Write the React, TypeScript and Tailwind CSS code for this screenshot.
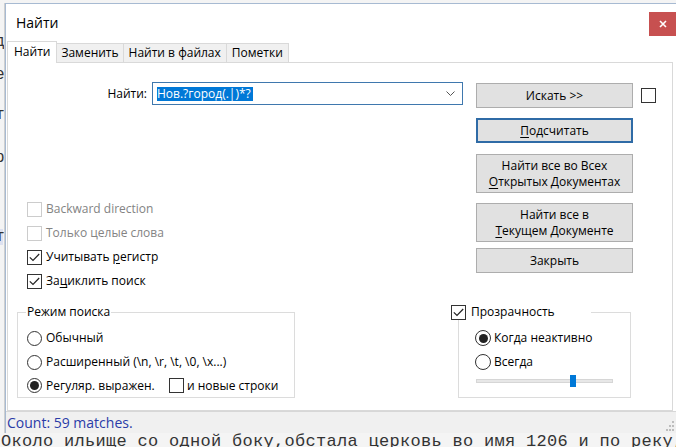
import React from 'react';

function CheckBox({ checked = false, disabled = false }: { checked?: boolean; disabled?: boolean }) {
  return (
    <span
      className={`flex h-[15px] w-[15px] shrink-0 items-center justify-center border bg-white ${
        disabled ? 'border-[#cccccc]' : 'border-[#333333]'
      }`}
    >
      {checked && (
        <svg width="11" height="9" viewBox="0 0 11 9" fill="none">
          <path d="M0.8 4.3 L4 7.5 L10.2 1" stroke="#222222" strokeWidth="1.2" />
        </svg>
      )}
    </span>
  );
}

function Radio({ checked = false, big = false }: { checked?: boolean; big?: boolean }) {
  return (
    <span
      className={`flex shrink-0 items-center justify-center rounded-full border border-[#333333] bg-white ${
        big ? 'h-[16px] w-[16px]' : 'h-[15px] w-[15px]'
      }`}
    >
      {checked && <span className="h-[9px] w-[9px] rounded-full bg-[#222222]" />}
    </span>
  );
}

function Btn({
  children,
  tall = false,
  focused = false,
  className = '',
}: {
  children: React.ReactNode;
  tall?: boolean;
  focused?: boolean;
  className?: string;
}) {
  return (
    <div
      className={`flex w-[157px] shrink-0 flex-col items-center justify-center bg-[#e1e1e1] text-center leading-[16px] ${
        tall ? 'h-[39px]' : 'h-[25px]'
      } ${focused ? 'border-2 border-[#2f6ba6]' : 'border border-[#adadad]'} ${className}`}
    >
      {children}
    </div>
  );
}

function CheckRow({
  checked,
  disabled,
  children,
}: {
  checked?: boolean;
  disabled?: boolean;
  children: React.ReactNode;
}) {
  return (
    <div className="flex h-[24px] items-center">
      <CheckBox checked={checked} disabled={disabled} />
      <span className={`ml-[4px] ${disabled ? 'text-[#838383]' : ''}`}>{children}</span>
    </div>
  );
}

function Editor() {
  // what shows of the editor behind the dialog
  return (
    <div className="flex h-full w-full flex-col bg-[#f4f4f4] font-['Liberation_Mono',monospace] text-[16px] leading-[20px] text-[#333333]">
      <div className="mt-[32px] -ml-[5px] h-[20px]">д</div>
      <div className="mt-[13px] -ml-[5px] h-[20px]">е</div>
      <div className="mt-[20px] -ml-[5px] h-[20px]">т</div>
      <div className="mt-[23px] -ml-[5px] h-[20px]">р</div>
      <div className="mt-[61px] h-[16px] w-[8px] bg-[#dde1f0] -ml-[5px] leading-[16px]">т</div>
      <div className="mt-auto -mb-[5px] whitespace-nowrap pl-[1px] text-[17px] leading-[20px] tracking-[0.3px]">
        Около ильище со одной боку,обстала церковь во имя 1206 и по реку,уд
      </div>
    </div>
  );
}

export default function App() {
  return (
    <div className="relative h-[447px] w-[676px] overflow-hidden font-['Open_Sans',sans-serif] text-[12px] text-black">
      <Editor />

      {/* dialog window */}
      <div className="absolute left-[5px] top-[3px] flex h-[430px] w-[671px] flex-col border-l border-t border-[#a7bad2] bg-white shadow-[-1px_0_0_#cfcfcf]">
        {/* title bar */}
        <div className="flex h-[37px] shrink-0 items-start">
          <div className="flex h-full items-center pl-[10px] text-[14px]">Найти</div>
          <div className="ml-auto mt-[8px] flex h-[24px] w-[27px] items-center justify-center bg-[#c75050]">
            <svg width="8" height="8" viewBox="0 0 8 8">
              <path d="M1 1 L7 7 M7 1 L1 7" stroke="white" strokeWidth="1.6" />
            </svg>
          </div>
        </div>

        {/* tabs */}
        <div className="flex h-[21px] shrink-0 items-end pl-[1px]">
          <div className="relative z-10 -mb-px flex h-[22px] items-center border border-b-0 border-[#d9d9d9] bg-white px-[6px] pb-px">
            Найти
          </div>
          <div className="flex h-[19px] items-center border-t border-r border-[#d9d9d9] bg-[#f0f0f0] px-[4px]">
            Заменить
          </div>
          <div className="flex h-[19px] items-center border-t border-r border-[#d9d9d9] bg-[#f0f0f0] px-[5px]">
            Найти в файлах
          </div>
          <div className="flex h-[19px] items-center border-t border-r border-[#d9d9d9] bg-[#f0f0f0] px-[5px]">
            Пометки
          </div>
        </div>

        {/* tab page */}
        <div className="ml-[1px] flex h-[349px] w-[666px] shrink-0 flex-col border border-[#d9d9d9] bg-white">
          <div className="flex">
            <div className="flex w-[455px] flex-col">
              <div className="mt-[19px] flex h-[23px] items-center">
                <span className="w-[139px] text-right">Найти:</span>
                <div className="ml-[5px] flex h-[23px] w-[311px] items-center border border-[#3f78ae] pl-[4px] pr-[7px]">
                  <span className="bg-[#0078d7] pr-[2px] leading-[14px] text-white">Нов.?город(.|)*?</span>
                  <svg className="ml-auto" width="9" height="5" viewBox="0 0 9 5" fill="none">
                    <path d="M0.5 0.5 L4.5 4.5 L8.5 0.5" stroke="#555555" strokeWidth="1" />
                  </svg>
                </div>
              </div>

              <div className="ml-[19px] mt-[92px] flex flex-col">
                <CheckRow disabled>Backward direction</CheckRow>
                <CheckRow disabled>Только целые слова</CheckRow>
                <CheckRow checked>
                  Учитывать <span className="underline underline-offset-2">р</span>егистр
                </CheckRow>
                <CheckRow checked>
                  За<span className="underline underline-offset-2">ц</span>иклить поиск
                </CheckRow>
              </div>
            </div>

            <div className="ml-[13px] mt-[20px] flex flex-col">
              <div className="flex items-center">
                <Btn>Искать &gt;&gt;</Btn>
                <span className="ml-[8px]">
                  <CheckBox />
                </span>
              </div>
              <Btn focused className="mt-[10px]">
                <span>
                  <span className="underline underline-offset-2">П</span>одсчитать
                </span>
              </Btn>
              <Btn tall className="mt-[11px]">
                <span>Найти все во Всех</span>
                <span>
                  <span className="underline underline-offset-2">О</span>ткрытых Документах
                </span>
              </Btn>
              <Btn tall className="mt-[10px]">
                <span>Найти все в</span>
                <span>
                  <span className="underline underline-offset-2">Т</span>екущем Документе
                </span>
              </Btn>
              <Btn className="mt-[6px]">Закрыть</Btn>
            </div>
          </div>

          <div className="mt-[11px] flex items-start">
            <fieldset className="ml-[9px] w-[278px] border border-[#dcdcdc] pl-[9px] pt-[6px]">
              <legend className="-ml-[1px] px-[1px] leading-[16px]">Режим поиска</legend>
              <div className="flex h-[24px] items-center">
                <Radio />
                <span className="ml-[4px]">Обычный</span>
              </div>
              <div className="flex h-[24px] items-center">
                <Radio />
                <span className="ml-[4px]">Расширенный (\n, \r, \t, \0, \x...)</span>
              </div>
              <div className="flex h-[23px] items-center">
                <Radio checked />
                <span className="ml-[4px] w-[123px]">Регуляр. выражен.</span>
                <CheckBox />
                <span className="ml-[3px]">и новые строки</span>
              </div>
            </fieldset>

            <fieldset className="ml-[163px] w-[173px] border border-[#dcdcdc] pb-[9px] pl-[16px] pt-[6px]">
              <legend className="-ml-[24px] flex h-[16px] w-[140px] items-center bg-white">
                <CheckBox checked />
                <span className="ml-[5px]">Прозрачность</span>
              </legend>
              <div className="flex h-[24px] items-center">
                <Radio checked big />
                <span className="ml-[3px]">Когда неактивно</span>
              </div>
              <div className="flex h-[24px] items-center">
                <Radio big />
                <span className="ml-[3px]">Всегда</span>
              </div>
              <div className="relative ml-[1px] flex h-[14px] items-center">
                <div className="h-[4px] w-[137px] border border-[#d6d6d6] bg-[#e7e7e7]" />
                <div className="absolute left-[94px] top-[1px] h-[12px] w-[6px] bg-[#0078d7]" />
              </div>
            </fieldset>
          </div>
        </div>

        {/* status bar */}
        <div className="flex h-[22px] shrink-0 items-end border-t border-[#d7d7d7] bg-[#f0f0f0] pl-[1px]">
          <span className="text-[14px] leading-[20px] text-[#2a3ca8]">Count: 59 matches.</span>
          <svg className="mb-[1px] ml-auto mr-[1px]" width="11" height="11" viewBox="0 0 11 11">
            <g fill="#bdbdbd">
              <rect x="8" y="0" width="2" height="2" />
              <rect x="5" y="4" width="2" height="2" />
              <rect x="8" y="4" width="2" height="2" />
              <rect x="2" y="8" width="2" height="2" />
              <rect x="5" y="8" width="2" height="2" />
              <rect x="8" y="8" width="2" height="2" />
            </g>
          </svg>
        </div>
      </div>
    </div>
  );
}
